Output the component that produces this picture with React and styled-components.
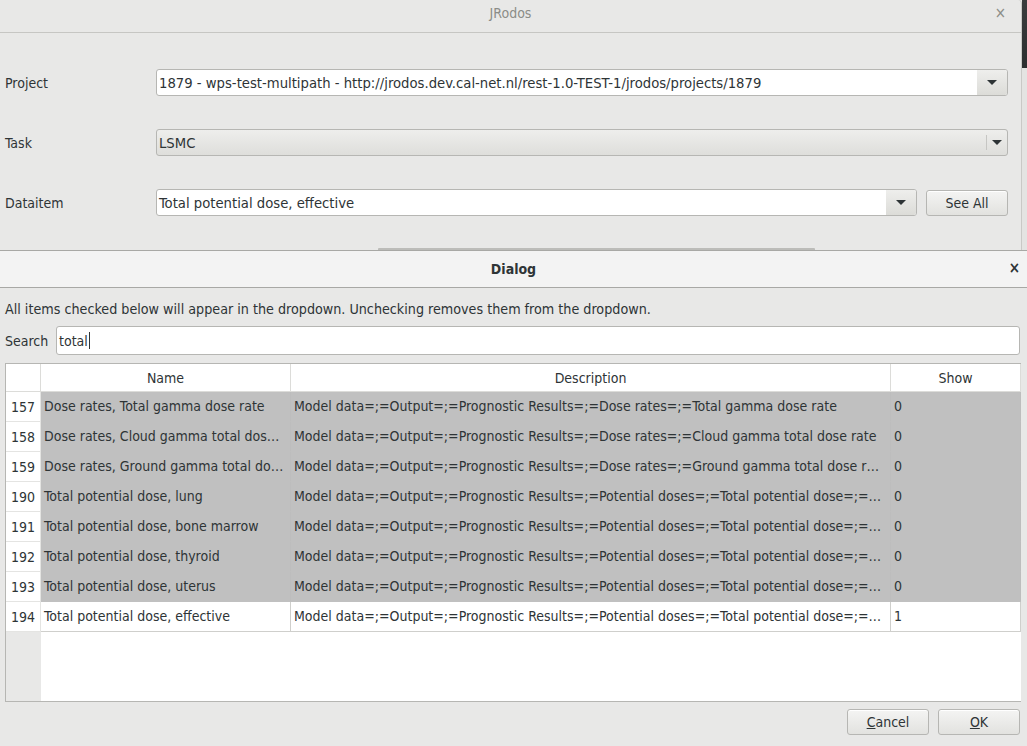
import React from 'react';
import styled, { createGlobalStyle } from 'styled-components';

const GlobalStyle = createGlobalStyle`
  html, body {
    margin: 0;
    padding: 0;
    background: #e8e8e7;
  }
  body {
    font-family: "DejaVu Sans", "Liberation Sans", sans-serif;
    font-stretch: semi-condensed;
    font-size: 13px;
    color: #2e3436;
  }
`;

const Screen = styled.div`
  width: 1027px;
  height: 746px;
  display: flex;
  flex-direction: column;
  overflow: hidden;
  background: #e8e8e7;
`;

const TopArea = styled.div`
  display: flex;
  height: 250px;
  flex-shrink: 0;
`;

const MainWindow = styled.div`
  width: 1021px;
  display: flex;
  flex-direction: column;
  border-right: 1px solid #c9c9c6;
  border-top-right-radius: 4px;
`;

const SideStrip = styled.div`
  flex: 1;
  display: flex;
  flex-direction: column;
  background: #e4e4e2;

  &::before {
    content: '';
    height: 68px;
    background: linear-gradient(#3a3c3d, #2c2e2f);
  }
`;

const WindowTitle = styled.div`
  height: 33px;
  box-sizing: border-box;
  padding-top: 5px;
  display: flex;
  justify-content: center;
  position: relative;
  border-bottom: 1px solid #c6c6c3;
  font-stretch: condensed;
  font-size: 14px;
  color: #8b8d88;
`;

const TitleClose = styled.span`
  position: absolute;
  right: 15px;
  top: 4px;
  font-size: 15px;
  color: #8b8d88;
`;

const FormGrid = styled.div`
  flex: 1;
  display: grid;
  grid-template-columns: 151px 1fr;
  grid-auto-rows: 27px;
  row-gap: 33px;
  padding: 36px 13px 0 5px;
  align-items: center;
`;

const Label = styled.div`
  font-size: 14px;
`;

const FieldLine = styled.div`
  display: flex;
  gap: 9px;
  height: 27px;
`;

const Combo = styled.div`
  flex: 1;
  display: flex;
  border: 1px solid #b6b6b3;
  border-radius: 3px;
  overflow: hidden;
  background: ${p => (p.$editable ? '#ffffff' : 'linear-gradient(#eeeeec, #dededb)')};
`;

const ComboText = styled.div`
  flex: 1;
  display: flex;
  align-items: center;
  padding-left: 2px;
  font-size: 14.7px;
  white-space: nowrap;
  overflow: hidden;
`;

const ComboButton = styled.div`
  width: ${p => (p.$flat ? '20px' : '30px')};
  display: flex;
  align-items: center;
  justify-content: center;
  background: ${p => (p.$flat ? 'transparent' : 'linear-gradient(#eeeeec, #dcdcd8)')};
  border-left: ${p => (p.$flat ? '1px solid #c6c6c3' : 'none')};
  margin: ${p => (p.$flat ? '5px 0' : '0')};
`;

const Arrow = styled.span`
  width: 0;
  height: 0;
  border-left: 5px solid transparent;
  border-right: 5px solid transparent;
  border-top: 5px solid #2e3436;
`;

const PushButton = styled.button`
  font-family: inherit;
  font-stretch: inherit;
  font-size: 14px;
  color: #2e3436;
  width: ${p => p.$width || '82px'};
  height: 26px;
  padding: 0;
  border: 1px solid #b6b6b3;
  border-radius: 3px;
  background: linear-gradient(#f4f4f3, #e2e2df);
  box-shadow: inset 0 1px #ffffff;
  margin-top: ${p => p.$offset || '0'};
`;

const Mnemonic = styled.span`
  text-decoration: underline;
`;

const HiddenBar = styled.div`
  height: 2px;
  margin-left: 378px;
  width: 437px;
  background: #bcbcb9;
  border-radius: 1px 1px 0 0;
`;

const Dialog = styled.div`
  flex: 1;
  display: flex;
  flex-direction: column;
  border-top: 1px solid #a8a8a5;
`;

const DialogTitle = styled.div`
  height: 36px;
  flex-shrink: 0;
  display: flex;
  align-items: center;
  justify-content: center;
  position: relative;
  background: #f3f3f3;
  border-bottom: 1px solid #a8a8a5;
  font-weight: bold;
  font-size: 14px;
`;

const DialogClose = styled.span`
  position: absolute;
  right: 7px;
  top: 8px;
  font-size: 15px;
  font-weight: bold;
`;

const DialogBody = styled.div`
  flex: 1;
  display: flex;
  flex-direction: column;
  padding: 13px 7px 12px 5px;
`;

const Hint = styled.div`
  font-size: 14.2px;
  height: 17px;
  line-height: 17px;
`;

const SearchRow = styled.div`
  display: flex;
  align-items: center;
  margin-top: 8px;
  font-size: 14px;
`;

const SearchLabel = styled.span`
  width: 51px;
`;

const SearchInput = styled.div`
  flex: 1;
  height: 27px;
  display: flex;
  align-items: center;
  padding-left: 2px;
  background: #ffffff;
  border: 1px solid #b6b6b3;
  border-radius: 3px;
  font-size: 14px;
`;

const Caret = styled.span`
  display: inline-block;
  width: 1px;
  height: 17px;
  background: #2e3436;
  margin-left: 1px;
`;

const Table = styled.div`
  margin-top: 8px;
  height: 337px;
  margin-right: -1px;
  display: grid;
  grid-template-columns: 35px 250px 600px 1fr;
  grid-template-rows: 28px repeat(8, 30px) 1fr;
  border: 1px solid #b6b6b3;
  border-right: none;
  background: #ffffff;
  font-size: 14px;
`;

const HeaderCell = styled.div`
  display: flex;
  align-items: center;
  justify-content: center;
  background: #ffffff;
  border-right: 1px solid #dcdcd9;
  border-bottom: 1px solid #dcdcd9;
`;

const RowNumber = styled.div`
  display: flex;
  align-items: center;
  justify-content: flex-end;
  padding-right: 5px;
  background: #ffffff;
  border-bottom: 1px solid #e4e4e2;
  border-right: 1px solid #e4e4e2;
`;

const Cell = styled.div`
  display: block;
  line-height: 29px;
  padding-left: 3px;
  padding-right: 3px;
  white-space: nowrap;
  overflow: hidden;
  text-overflow: ellipsis;
  background: ${p => (p.$selected ? '#c0c0c0' : '#ffffff')};
  border-right: 1px solid ${p => (p.$selected ? '#bdbdbd' : '#cfcfcc')};
  border-bottom: 1px solid ${p => (p.$selected ? '#c0c0c0' : '#cfcfcc')};
`;

const EmptyGutter = styled.div`
  background: #e8e8e7;
`;

const EmptyArea = styled.div`
  grid-column: 2 / -1;
  background: #ffffff;
`;

const ButtonRow = styled.div`
  display: flex;
  justify-content: flex-end;
  gap: 9px;
  margin-top: 7px;
`;

const prefix = 'Model data=;=Output=;=Prognostic Results=;=';
const potential = prefix + 'Potential doses=;=Total potential dose=;=…';

const rows = [
  { id: 157, name: 'Dose rates, Total gamma dose rate', desc: prefix + 'Dose rates=;=Total gamma dose rate', show: 0 },
  { id: 158, name: 'Dose rates, Cloud gamma total dos…', desc: prefix + 'Dose rates=;=Cloud gamma total dose rate', show: 0 },
  { id: 159, name: 'Dose rates, Ground gamma total do…', desc: prefix + 'Dose rates=;=Ground gamma total dose r…', show: 0 },
  { id: 190, name: 'Total potential dose, lung', desc: potential, show: 0 },
  { id: 191, name: 'Total potential dose, bone marrow', desc: potential, show: 0 },
  { id: 192, name: 'Total potential dose, thyroid', desc: potential, show: 0 },
  { id: 193, name: 'Total potential dose, uterus', desc: potential, show: 0 },
  { id: 194, name: 'Total potential dose, effective', desc: potential, show: 1 },
];

const App = () => {
  return (
    <>
      <GlobalStyle />
      <Screen>
        <TopArea>
          <MainWindow>
            <WindowTitle>
              JRodos
              <TitleClose>×</TitleClose>
            </WindowTitle>
            <FormGrid>
              <Label>Project</Label>
              <FieldLine>
                <Combo $editable>
                  <ComboText>1879 - wps-test-multipath - http://jrodos.dev.cal-net.nl/rest-1.0-TEST-1/jrodos/projects/1879</ComboText>
                  <ComboButton><Arrow /></ComboButton>
                </Combo>
              </FieldLine>

              <Label>Task</Label>
              <FieldLine>
                <Combo>
                  <ComboText>LSMC</ComboText>
                  <ComboButton $flat><Arrow /></ComboButton>
                </Combo>
              </FieldLine>

              <Label>Dataitem</Label>
              <FieldLine>
                <Combo $editable>
                  <ComboText>Total potential dose, effective</ComboText>
                  <ComboButton><Arrow /></ComboButton>
                </Combo>
                <PushButton $offset="1px">See All</PushButton>
              </FieldLine>
            </FormGrid>
            <HiddenBar />
          </MainWindow>
          <SideStrip />
        </TopArea>

        <Dialog>
          <DialogTitle>
            Dialog
            <DialogClose>×</DialogClose>
          </DialogTitle>
          <DialogBody>
            <Hint>All items checked below will appear in the dropdown. Unchecking removes them from the dropdown.</Hint>
            <SearchRow>
              <SearchLabel>Search</SearchLabel>
              <SearchInput>total<Caret /></SearchInput>
            </SearchRow>

            <Table>
              <HeaderCell />
              <HeaderCell>Name</HeaderCell>
              <HeaderCell>Description</HeaderCell>
              <HeaderCell>Show</HeaderCell>
              {rows.map(row => {
                const selected = row.show === 0;
                return (
                  <React.Fragment key={row.id}>
                    <RowNumber>{row.id}</RowNumber>
                    <Cell $selected={selected}>{row.name}</Cell>
                    <Cell $selected={selected}>{row.desc}</Cell>
                    <Cell $selected={selected}>{row.show}</Cell>
                  </React.Fragment>
                );
              })}
              <EmptyGutter />
              <EmptyArea />
            </Table>

            <ButtonRow>
              <PushButton><Mnemonic>C</Mnemonic>ancel</PushButton>
              <PushButton><Mnemonic>O</Mnemonic>K</PushButton>
            </ButtonRow>
          </DialogBody>
        </Dialog>
      </Screen>
    </>
  );
};

export default App;
